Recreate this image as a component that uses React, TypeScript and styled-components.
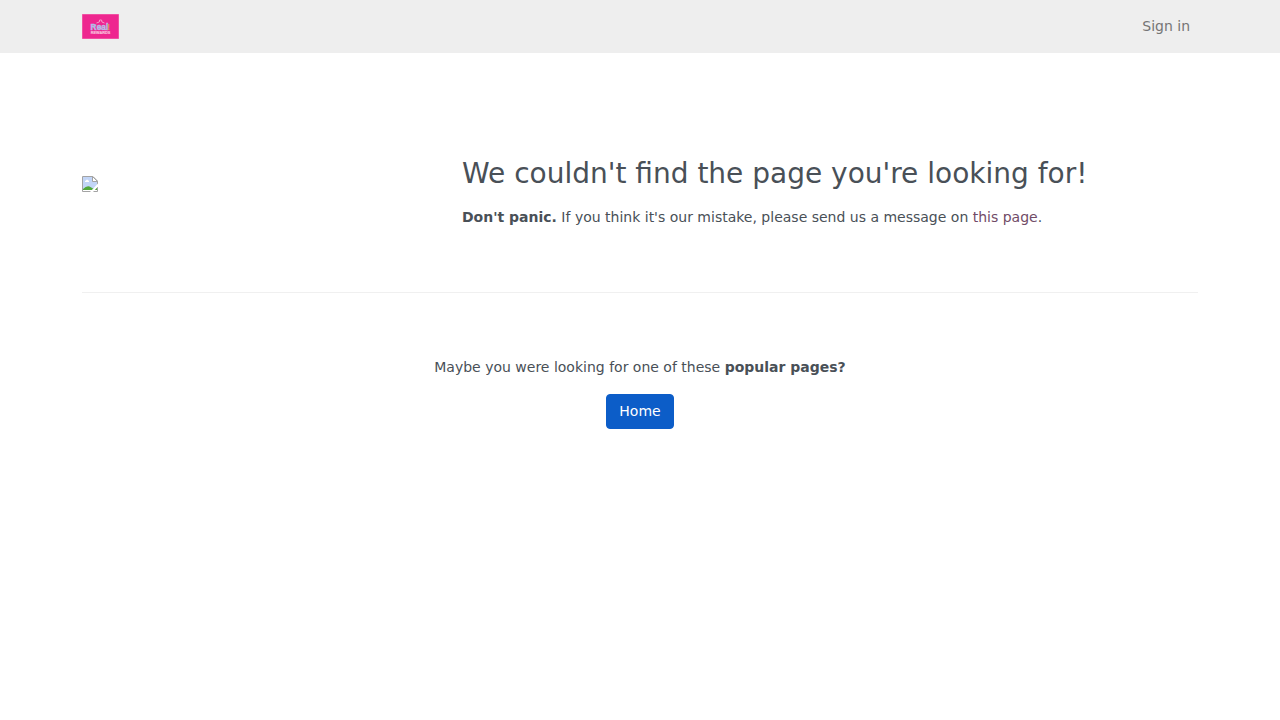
import React from "react";
import styled, { createGlobalStyle } from "styled-components";

const GlobalStyle = createGlobalStyle`
  *, *::before, *::after { box-sizing: border-box; }
  body {
    margin: 0;
    background: #fff;
    color: #495057;
    font: 400 14px/21px "DejaVu Sans", sans-serif;
  }
`;

const Container = styled.div`
  width: 100%;
  max-width: 1140px;
  margin: 0 auto;
  padding: 0 12px;
`;

const Header = styled.header`
  background: #eee;
`;

const Nav = styled.nav`
  display: flex;
  align-items: center;
  justify-content: space-between;
  min-height: 53px;
`;

const Brand = styled.a`
  display: flex;
  svg { display: block; }
`;

const NavLink = styled.a`
  padding: 8px;
  color: #757575;
  text-decoration: none;
`;

const Message = styled.section`
  display: grid;
  grid-template-columns: 1fr 2fr;
  margin: 0 -12px;
  padding: 104px 0 48px;

  > div { padding: 0 12px; }

  @media (max-width: 991px) {
    grid-template-columns: 1fr;
    row-gap: 24px;
  }
`;

const Illustration = styled.div`
  svg {
    display: block;
    margin-top: 19px;
  }
`;

const Title = styled.h1`
  margin: 0 0 16px;
  font-size: 28px;
  font-weight: 400;
  line-height: 34px;
`;

const Paragraph = styled.p`
  margin: 0 0 16px;
`;

const TextLink = styled.a`
  color: #714b67;
  text-decoration: none;
`;

const Divider = styled.hr`
  margin: 0;
  border: 0;
  border-top: 1px solid #f0f0f0;
`;

const Popular = styled.section`
  padding: 64px 0;
  text-align: center;
`;

const ButtonLink = styled.a`
  display: inline-block;
  padding: 6px 12px;
  border: 1px solid #0c5dc8;
  border-radius: 4px;
  background: #0c5dc8;
  color: #fff;
  text-decoration: none;
`;

function Logo() {
  return (
    <svg width="37" height="25" viewBox="0 0 37 25" role="img" aria-label="Real Rewards">
      <rect width="37" height="25" fill="#f390c0" />
      <rect x="0.4" y="0.4" width="36.2" height="24.2" fill="#ee268f" />
      <path d="M14.5 9 L17.3 8 L17.6 6 H19.6 L19.9 8 L22.5 9" fill="none" stroke="#f7b5d6" strokeWidth="0.8" />
      <g fontFamily="Liberation Sans, sans-serif" fontWeight="700">
        <text x="8.6" y="15.7" fontSize="8.4" fill="#8fc6ee" stroke="#c9b6e2" strokeWidth="0.5">Real</text>
        <text x="25.2" y="15.7" fontSize="8.4" fill="#e99a5c">!</text>
        <text x="8.8" y="19.5" fontSize="3.8" fill="#f9bcd9" stroke="#f9bcd9" strokeWidth="0.2">REWARDS</text>
      </g>
    </svg>
  );
}

function MissingImage() {
  return (
    <svg width="16" height="16" viewBox="0 0 16 16" aria-hidden="true">
      <path d="M0.5 0.5 H11 L15.5 5 V15.5 H0.5 Z" fill="#fff" stroke="#a3a3a3" />
      <path d="M1 1 H11 V6 H15 V15 H1 Z" fill="#c2d5f7" />
      <path d="M3 6 Q2.6 4.6 4 4.5 Q5 2.6 6 4.2 Q7.6 4.6 7 6 Z" fill="#fff" />
      <path d="M1 14 V13 Q4.5 9.5 7.5 10.5 L11 12.5 L15 12 V14 Z" fill="#51a83b" />
      <path d="M1 14.5 H15" stroke="#fff" />
      <path d="M10.5 0.5 V5.5 H15.5 Z" fill="#fff" stroke="#a3a3a3" />
      <path d="M8 16 L16 7.5 V10.5 L11 16 Z" fill="#fff" />
    </svg>
  );
}

export default function App() {
  return (
    <>
      <GlobalStyle />
      <Header>
        <Container>
          <Nav>
            <Brand href="#"><Logo /></Brand>
            <NavLink href="#">Sign in</NavLink>
          </Nav>
        </Container>
      </Header>
      <main>
        <Container>
          <Message>
            <Illustration><MissingImage /></Illustration>
            <div>
              <Title>We couldn't find the page you're looking for!</Title>
              <Paragraph>
                <strong>Don't panic.</strong> If you think it's our mistake, please send us a message on{" "}
                <TextLink href="#">this page</TextLink>.
              </Paragraph>
            </div>
          </Message>
          <Divider />
          <Popular>
            <Paragraph>
              Maybe you were looking for one of these <strong>popular pages?</strong>
            </Paragraph>
            <ButtonLink href="#">Home</ButtonLink>
          </Popular>
        </Container>
      </main>
    </>
  );
}
